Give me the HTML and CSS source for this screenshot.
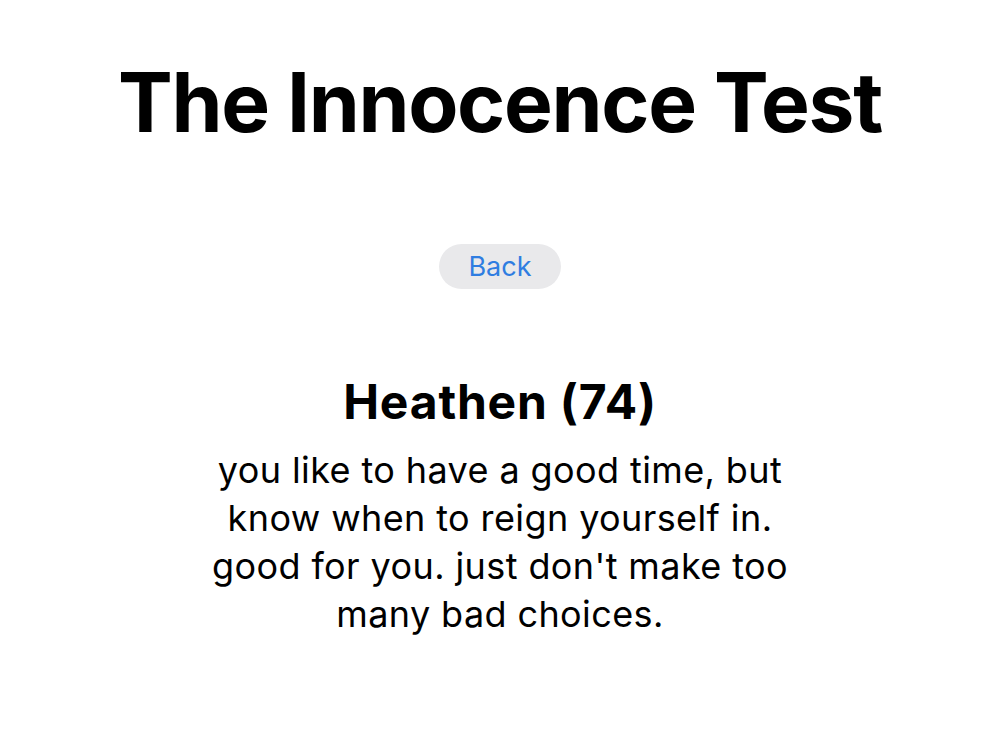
FILE: index.html
```html
<!DOCTYPE html>
<html lang="en">
<head>
    <meta charset="UTF-8">
    <meta name="viewport" content="width=device-width, initial-scale=1.0">
    <title>The Innocence Test</title>
    <link rel="stylesheet" href="styles.css">
</head>
<body>

<div class="page">
    <h1 class="title">The Innocence Test</h1>

    <button class="back-button">Back</button>

    <div class="result">
        <h2 class="result-name">Heathen (74)</h2>
        <p class="result-text">you like to have a good time, but know when to reign yourself in. good for you. just don't make too many bad choices.</p>
    </div>
</div>

</body>
</html>
```

FILE: styles.css
```css
* {
    box-sizing: border-box;
}
body {
    margin: 0;
    background-color: #fff;
    color: #000;
    font-family: Inter, "Noto Sans", sans-serif;
}
.page {
    display: flex;
    flex-direction: column;
    align-items: center;
    padding-top: 53px;
}
.title {
    margin: 0;
    font-size: 82px;
    font-weight: 700;
    line-height: 100px;
    letter-spacing: -1.3px;
}
.back-button {
    margin-top: 91px;
    width: 122px;
    height: 45px;
    border: none;
    border-radius: 23px;
    background-color: #e9e9eb;
    color: #2f7de1;
    font-family: inherit;
    font-size: 27px;
    cursor: pointer;
}
.result {
    display: flex;
    flex-direction: column;
    align-items: center;
    margin-top: 85px;
}
.result-name {
    margin: 0 0 16px;
    font-size: 48px;
    font-weight: 700;
    line-height: 56px;
    letter-spacing: 0.8px;
}
.result-text {
    margin: 0;
    width: 596px;
    font-size: 36px;
    line-height: 48px;
    letter-spacing: 0.4px;
    text-align: center;
}
```
